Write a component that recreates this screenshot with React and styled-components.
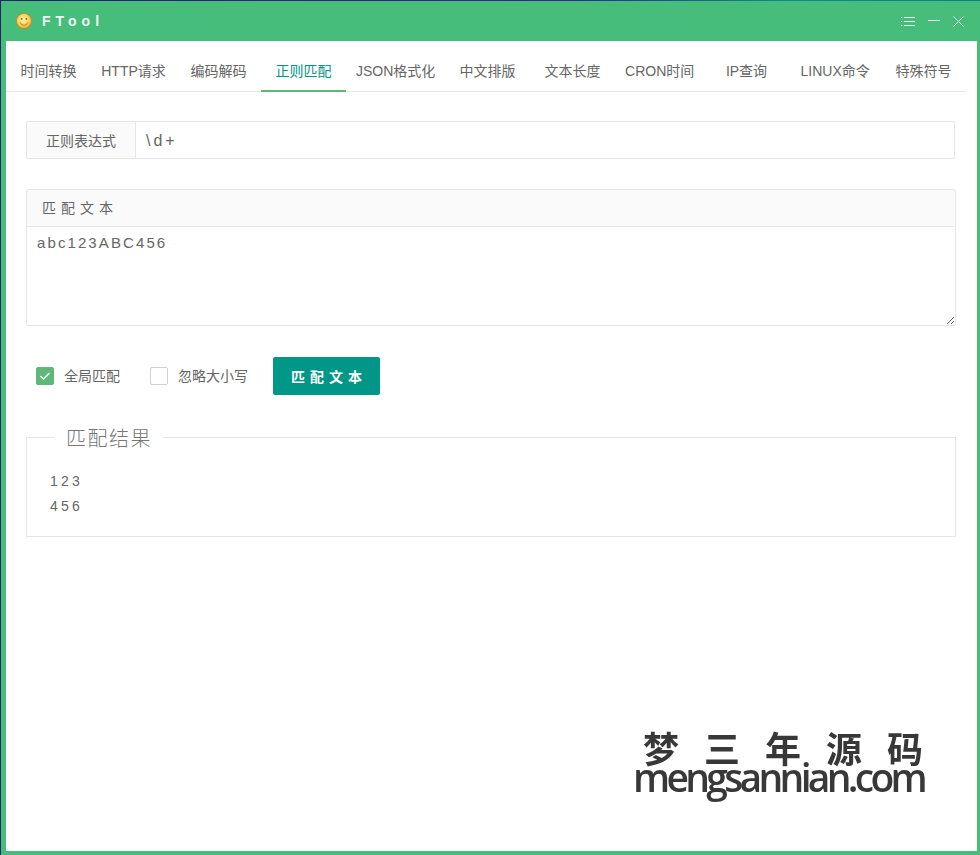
import React from "react";
import styled, { createGlobalStyle } from "styled-components";

const Global = createGlobalStyle`
  html, body { margin: 0; padding: 0; background: #fff; }
  * { box-sizing: border-box; }
  body { font-family: "Liberation Sans", "Noto Sans CJK SC", sans-serif; font-size: 14px; color: #666; }
`;

const Desktop = styled.div`
  width: 980px; height: 855px; padding: 1px 0 0 1px;
  background: linear-gradient(90deg, #23236b 0%, #2d2f86 60%, #0f8a94 80%, #0d7c8e 100%);
  overflow: hidden;
`;
const Frame = styled.div`
  height: 100%; background: #47bd7c; display: flex; flex-direction: column;
`;
const TitleBar = styled.header`
  height: 40px; flex: none; display: flex; align-items: center; padding: 0 16px 0 14px; color: #fff;
`;
const AppName = styled.span`
  margin-left: 9px; font-weight: 700; font-size: 14px; letter-spacing: 5px; color: #eefaf3;
`;
const WindowControls = styled.div`
  margin-left: auto; display: flex; align-items: center; gap: 13px;
`;
const Body = styled.main`
  position: relative; flex: 1; margin: 0 3px 4px 5px; background: #fff; padding-top: 11px;
`;
const Tabs = styled.nav`
  display: flex; width: 960px; height: 40px; border-bottom: 1px solid #e6e6e6;
`;
const Tab = styled.div`
  min-width: 85px; height: 40px; padding: 0 ${p => (p.$roomy ? "11.5px" : "10px")}; line-height: 38px; text-align: center; white-space: nowrap;
  color: ${p => (p.$active ? "#009688" : "#666")};
  border-bottom: ${p => (p.$active ? "2px solid #5fb878" : "none")};
`;
const Form = styled.section`
  padding: 29px 0 0 20px; width: 950px;
`;
const InputRow = styled.div`
  display: flex; height: 38px; width: 929px; border: 1px solid #e6e6e6; border-radius: 2px;
`;
const Pane = styled.label`
  width: 109px; flex: none; background: #fafafa; border-right: 1px solid #e6e6e6;
  text-align: center; line-height: 38px;
`;
const RegexInput = styled.input`
  flex: 1; border: 0; outline: 0; padding: 2px 10px 0; font: inherit; font-size: 16px; letter-spacing: 3px; color: #666; background: #fff;
`;
const TextBlock = styled.div`
  margin-top: 30px; width: 930px; display: flex; flex-direction: column;
`;
const BlockHead = styled.div`
  height: 38px; padding-left: 15px; line-height: 36px; letter-spacing: 5px; background: #fafafa;
  border: 1px solid #e6e6e6; border-radius: 2px 2px 0 0;
`;
const Source = styled.textarea`
  display: block; width: 100%; height: 100px; margin-top: -1px; padding: 6px 10px; border: 1px solid #e6e6e6; border-radius: 0 0 2px 2px;
  font: inherit; font-size: 15px; line-height: 20px; letter-spacing: 2.1px; color: #666; outline: 0; resize: vertical;
`;
const Actions = styled.div`
  display: flex; align-items: center; margin-top: 31px; padding-left: 10px; height: 38px;
`;
const Check = styled.label`
  display: flex; align-items: center; gap: 10px; margin-right: ${p => p.$gap}px; line-height: 18px;
`;
const CheckText = styled.span`
  display: block; margin-top: -1px;
`;
const Box = styled.span`
  width: 18px; height: 18px; display: flex; align-items: center; justify-content: center; border-radius: 2px;
  background: ${p => (p.$on ? "#5fb878" : "#fff")};
  border: 1px solid ${p => (p.$on ? "#5fb878" : "#d2d2d2")};
`;
const Submit = styled.button`
  width: 107px; height: 38px; border: 0; border-radius: 2px; background: #009688; color: #fff;
  font: inherit; font-weight: 700; letter-spacing: 5px; padding: 0 0 0 5px;
`;
const Result = styled.fieldset`
  margin: 28px 0 0; padding: 0 0 0 23px; width: 930px; height: 114px; border: 1px solid #e6e6e6; border-radius: 0;
  min-width: 0;
`;
const ResultTitle = styled.legend`
  margin-left: 5px; padding: 4px 11px 0; font-size: 20px; line-height: 24px; font-weight: 300; letter-spacing: 1.5px; color: #777;
`;
const ResultLines = styled.div`
  margin-top: 18px; line-height: 25px; letter-spacing: 3.2px; color: #666;
`;
const Watermark = styled.aside`
  position: absolute; left: 627px; top: 686px; width: 300px; color: #383838; filter: blur(0.6px); pointer-events: none;
`;
const WaterCn = styled.div`
  font-family: "Noto Sans CJK SC", sans-serif; font-size: 36px; font-weight: 700; line-height: 41px; letter-spacing: 25px;
  padding-left: 10px; white-space: nowrap;
`;
const WaterEn = styled.div`
  font-family: "Open Sans", sans-serif; font-size: 39px; font-weight: 600; line-height: 18px; letter-spacing: -3.7px; white-space: nowrap;
`;

const Smiley = () => (
  <svg width="18" height="18" viewBox="0 0 18 18">
    <defs>
      <radialGradient id="face" cx="45%" cy="40%" r="60%">
        <stop offset="0" stopColor="#fff3a0" />
        <stop offset="0.7" stopColor="#f2cf5c" />
        <stop offset="1" stopColor="#e2a52f" />
      </radialGradient>
    </defs>
    <circle cx="9" cy="9" r="7.6" fill="url(#face)" stroke="#c98a22" strokeWidth="1" />
    <circle cx="6.6" cy="7" r="0.9" fill="#9b6a17" />
    <circle cx="11.4" cy="7" r="0.9" fill="#9b6a17" />
    <path d="M5 10.4c1 2 2.4 2.8 4 2.8s3-.8 4-2.8" fill="none" stroke="#a8741c" strokeWidth="0.9" />
  </svg>
);
const ListIcon = () => (
  <svg width="14" height="10" viewBox="0 0 14 10" stroke="#eafaf1" strokeWidth="1" fill="none">
    <path d="M3 1.5h11M3 5.5h11M3 9.5h11" />
    <path d="M0 1.5h1.2M0 5.5h1.2M0 9.5h1.2" />
  </svg>
);
const MinIcon = () => (
  <svg width="12" height="10" viewBox="0 0 12 10" stroke="#eafaf1" strokeWidth="1" fill="none">
    <path d="M0 4.5h12" />
  </svg>
);
const CloseIcon = () => (
  <svg width="11" height="11" viewBox="0 0 11 11" stroke="#eafaf1" strokeWidth="1" fill="none">
    <path d="M.5.5l10 10M10.5.5l-10 10" />
  </svg>
);
const Tick = () => (
  <svg width="12" height="10" viewBox="0 0 12 10" fill="none" stroke="#fff" strokeWidth="1.4">
    <path d="M1.5 5l3 3 6-6" />
  </svg>
);

const tabs = ["时间转换", "HTTP请求", "编码解码", "正则匹配", "JSON格式化", "中文排版", "文本长度", "CRON时间", "IP查询", "LINUX命令", "特殊符号"];

export default function App() {
  return (
    <>
      <Global />
      <Desktop>
        <Frame>
          <TitleBar>
            <Smiley />
            <AppName>FTool</AppName>
            <WindowControls>
              <ListIcon />
              <MinIcon />
              <CloseIcon />
            </WindowControls>
          </TitleBar>
          <Body>
            <Tabs>
              {tabs.map(t => (
                <Tab key={t} $active={t === "正则匹配"} $roomy={t === "LINUX命令"}>{t}</Tab>
              ))}
            </Tabs>
            <Form>
              <InputRow>
                <Pane>正则表达式</Pane>
                <RegexInput defaultValue="\d+" />
              </InputRow>
              <TextBlock>
                <BlockHead>匹配文本</BlockHead>
                <Source defaultValue="abc123ABC456" />
              </TextBlock>
              <Actions>
                <Check $gap={30}><Box $on><Tick /></Box><CheckText>全局匹配</CheckText></Check>
                <Check $gap={25}><Box /><CheckText>忽略大小写</CheckText></Check>
                <Submit>匹配文本</Submit>
              </Actions>
              <Result>
                <ResultTitle>匹配结果</ResultTitle>
                <ResultLines>123<br />456</ResultLines>
              </Result>
            </Form>
            <Watermark>
              <WaterCn>梦三年源码</WaterCn>
              <WaterEn>mengsannian.com</WaterEn>
            </Watermark>
          </Body>
        </Frame>
      </Desktop>
    </>
  );
}
